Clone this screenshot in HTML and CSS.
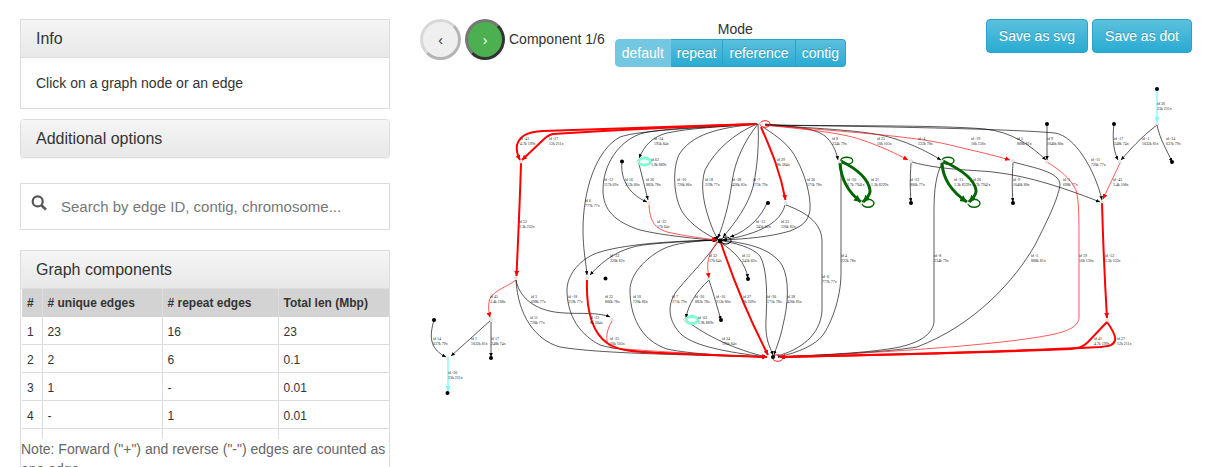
FILE: index.html
```html
<!DOCTYPE html>
<html lang="en">
<head>
<meta charset="utf-8">
<title>Assembly graph</title>
<link rel="stylesheet" href="styles.css">
</head>
<body>
<div class="page">
  <aside class="side">
    <section class="panel">
      <h3 class="panel-head">Info</h3>
      <div class="panel-body">Click on a graph node or an edge</div>
    </section>
    <section class="panel panel-round">
      <h3 class="panel-head panel-head-only">Additional options</h3>
    </section>
    <div class="search">
      <svg class="search-icon" viewBox="0 0 16 16" width="16" height="16"><circle cx="6.7" cy="6.4" r="5" fill="none" stroke="#555" stroke-width="2.2"/><path d="M10.4 10.2 L15 14.6" stroke="#555" stroke-width="2.6" fill="none"/></svg>
      <span class="search-ph">Search by edge ID, contig, chromosome...</span>
    </div>
    <section class="panel panel-comp">
      <h3 class="panel-head">Graph components</h3>
      <div class="table-wrap">
        <table class="comp">
          <thead><tr><th class="c1">#</th><th class="c2"># unique edges</th><th class="c3"># repeat edges</th><th class="c4">Total len (Mbp)</th></tr></thead>
          <tbody>
            <tr><td>1</td><td>23</td><td>16</td><td>23</td></tr>
            <tr><td>2</td><td>2</td><td>6</td><td>0.1</td></tr>
            <tr><td>3</td><td>1</td><td>-</td><td>0.01</td></tr>
            <tr><td>4</td><td>-</td><td>1</td><td>0.01</td></tr>
            <tr><td>5</td><td>1</td><td>-</td><td>0.01</td></tr>
          </tbody>
        </table>
      </div>
      <p class="note">Note: Forward ("+") and reverse ("-") edges are counted as one edge.</p>
    </section>
  </aside>
  <main class="main">
    <div class="toolbar">
      <button class="round round-prev">‹</button>
      <button class="round round-next">›</button>
      <span class="comp-label">Component 1/6</span>
      <div class="mode">
        <div class="mode-title">Mode</div>
        <div class="seg">
          <button class="seg-btn seg-active">default</button><button class="seg-btn">repeat</button><button class="seg-btn">reference</button><button class="seg-btn">contig</button>
        </div>
      </div>
      <div class="saves">
        <button class="btn-info">Save as svg</button>
        <button class="btn-info">Save as dot</button>
      </div>
    </div>
    <svg class="graph" width="802" height="387" viewBox="420 80 802 387">
      <defs>
        <marker id="ab" markerUnits="userSpaceOnUse" markerWidth="5" markerHeight="4" refX="4" refY="1.75" orient="auto"><path d="M0 0 L4 1.75 L0 3.5 Z" fill="#000"/></marker>
        <marker id="ar" markerUnits="userSpaceOnUse" markerWidth="6" markerHeight="5" refX="5" refY="2.5" orient="auto"><path d="M0 0 L5 2.5 L0 5 Z" fill="#f00"/></marker>
        <marker id="ag" markerUnits="userSpaceOnUse" markerWidth="8" markerHeight="7" refX="7" refY="3.5" orient="auto"><path d="M0 0 L7 3.5 L0 7 Z" fill="#060"/></marker>
        <marker id="ac" markerUnits="userSpaceOnUse" markerWidth="6" markerHeight="5" refX="5" refY="2.5" orient="auto"><path d="M0 0 L5 2.5 L0 5 Z" fill="#7ff"/></marker>
      </defs>

      <g class="e-black" marker-end="url(#ab)">
        <path d="M757 124 C728 127 695 131 680 153 C672 166 673 198 683 213 C692 226 705 233 717 240"/>
        <path d="M757 124 C735 133 715 150 705 170 C700 185 703 205 713 230 L718 240"/>
        <path d="M758 124 C745 140 735 160 732 182 C729 205 724 222 718 238"/>
        <path d="M758 124 C759 140 758 165 753 187 C748 205 736 222 723 237"/>
        <path d="M763 127 C778 137 790 145 797 160 C805 175 811 195 810 210 C808 222 802 226 790 231 C770 237 745 239 722 240"/>
        <path d="M757 124 C700 128 640 130 620 137 C596 150 583 190 583 230 C583 250 586 262 587 275"/>
        <path d="M757 124 C710 127 660 128 640 134 C618 142 603 165 603 190 C603 210 615 222 640 230 C665 236 695 238 717 241"/>
        <path d="M757 124 C720 127 690 128 667 133 C652 137 645 145 639 158"/>
        <path d="M639 164 L648 200"/>
        <path d="M622 162 C620 180 630 195 647 202"/>
        <path d="M767 203 C762 215 750 230 730 237"/>
        <path d="M785 205 C782 216 772 232 723 240"/>
        <path d="M765 124 C790 126 815 128 825 136 C832 142 836 150 838 160"/>
        <path d="M765 125 C810 128 860 130 885 136 C905 141 925 150 941 160"/>
        <path d="M765 125 C830 126 940 125 985 129 C1012 132 1030 145 1046 160"/>
        <path d="M765 125 C830 126 1000 128 1055 133 C1075 136 1095 170 1102 200"/>
        <path d="M717 240 C690 241 660 243 643 245 C622 248 605 258 590 275"/>
        <path d="M717 240 C680 241 630 243 600 252 C580 258 567 275 567 290 C567 310 575 332 600 345 C625 353 700 355 767 357"/>
        <path d="M717 240 C695 241 675 243 663 249 C645 258 630 275 630 290 C630 315 640 340 667 349 C690 354 730 356 767 357"/>
        <path d="M718 242 C705 260 690 275 680 287 C665 303 668 322 682 335 C695 346 725 352 767 357"/>
        <path d="M718 240 C735 243 752 247 760 256 C768 270 767 300 766 320 C765 340 770 347 773 355"/>
        <path d="M720 240 C745 243 770 247 782 265 C790 280 788 305 783 325 C780 340 776 348 774 355"/>
        <path d="M687 321 C705 335 735 350 767 357"/>
        <path d="M720 242 C735 252 745 262 748 278"/>
        <path d="M709 280 C696 292 688 305 686 318"/>
        <path d="M709 280 C714 295 718 310 721 320"/>
        <path d="M516 280 C520 300 538 312 565 313 C580 314 598 312 610 317"/>
        <path d="M516 280 C518 315 535 340 560 347 C600 354 700 355 767 357"/>
        <path d="M491 320 L451 356"/>
        <path d="M434 320 C428 340 432 350 446 357"/>
        <path d="M1157 125 C1140 138 1130 150 1121 160"/>
        <path d="M1114 124 C1112 140 1114 152 1118 160"/>
        <path d="M1157 125 C1160 140 1167 150 1172 162"/>
        <path d="M1047 124 L1047 160"/>
        <path d="M491 322 L491 357"/>
        <path d="M911 163 C910 178 910 190 911 202"/>
        <path d="M1013 163 C1012 178 1012 190 1013 202"/>
        <path d="M912 162 C940 170 975 170 993 172 C1030 176 1070 190 1100 202"/>
      </g>
      <g class="e-black">
        <path d="M786 205 C805 212 821 222 822 240 L822 310 C821 335 800 350 777 356"/>
        <path d="M841 164 L841 273 C841 300 830 325 823 335 C815 345 800 352 778 357"/>
        <path d="M942 163 C936 175 934 190 934 210 L934 322 C932 335 920 342 900 347 C870 353 820 355 778 357"/>
        <path d="M1013 162 C1035 168 1060 172 1060 185 C1058 200 1045 225 1035 245 C1015 280 975 325 917 347 C880 353 820 355 778 357"/>
      </g>
      <g class="e-red-thick" marker-end="url(#ar)">
        <path d="M757 124 C700 126 590 129 543 131 C528 132 520 135 517 145 C516 150 518 156 520 160"/>
        <path d="M757 124 C700 126 600 131 553 134 C548 135 546 137 543 140 L522 160"/>
        <path d="M521 163 C520 200 518 240 516.5 276"/>
        <path d="M1102 203 C1103 240 1105 285 1107 318"/>
        <path d="M1107 322 L1088 342 C1082 348 1078 348 1070 349 C980 353 880 355 780 357"/>
        <path d="M1107 322 C1112 329 1116 336 1115 340 C1114 346 1108 346 1100 347 C1000 352 880 355 780 357"/>
        <path d="M761 127 C770 148 780 170 785.5 200"/>
        <path d="M721 243 C735 285 750 320 768 355"/>
        <path d="M587 280 C586 310 592 332 607 343 C620 352 640 352 660 353 L767 357"/>
      </g>
      <g class="e-red" marker-end="url(#ar)">
        <path d="M516 280 C505 288 490 292 489 302 C488 308 489 313 490 317.5"/>
        <path d="M1120 163 L1103 199"/>
        <path d="M649 205 C650 222 655 228 667 232 C685 236 700 238 717 240"/>
        <path d="M717 242 C708 255 706 262 709 278"/>
        <path d="M612 321 C605 332 605 345 612 348 C660 352 720 355 767 357"/>
        <path d="M765 125 C800 129 840 132 862 140 C880 146 895 153 908 160"/>
        <path d="M765 125 C820 130 910 135 950 145 C970 150 990 154 1010 160"/>
        <path d="M1047 162 C1060 170 1070 178 1076 190 C1079 200 1079 220 1079 240 L1079 318 C1078 326 1070 331 1050 335 C1000 345 880 353 780 357"/>
      </g>
      <g class="e-green" marker-end="url(#ag)">
        <path d="M840 163 C841 180 848 192 861 202"/>
        <path d="M841 161 C855 168 868 178 870 190 C871 195 866 199 863 202"/>
        <path d="M942 163 C943 180 952 192 967 202"/>
        <path d="M943 161 C958 168 974 178 976 190 C977 195 972 199 969 202"/>
      </g>
      <g class="e-cyan" marker-end="url(#ac)">
        <path d="M1157 90 L1157 122"/>
        <path d="M448 359 L448 391"/>
      </g>

      <g class="loop-green">
        <ellipse cx="846.7" cy="160.7" rx="6" ry="3.5"/><ellipse cx="868" cy="203.3" rx="6" ry="4"/>
        <ellipse cx="948" cy="160.7" rx="6" ry="3.5"/><ellipse cx="974" cy="203.3" rx="6" ry="4"/>
      </g>
      <g class="loop-aqua">
        <ellipse cx="644.5" cy="161.5" rx="6" ry="3.5"/><ellipse cx="692" cy="320" rx="6" ry="3.5"/>
      </g>
      <ellipse class="loop-red" cx="765" cy="124" rx="5" ry="3.3"/>
      <ellipse class="loop-red" cx="777.7" cy="358" rx="5" ry="3.3"/>
      <ellipse class="loop-black" cx="726" cy="240.5" rx="5" ry="3.5"/>

      <g class="dots">
        <circle cx="622" cy="161.5" r="2"/><circle cx="768" cy="203" r="2"/><circle cx="911" cy="203" r="2"/>
        <circle cx="1013" cy="203" r="2"/><circle cx="1047" cy="124" r="2"/><circle cx="1114" cy="124" r="2"/>
        <circle cx="1157" cy="89" r="2"/><circle cx="1172" cy="162" r="2"/><circle cx="748" cy="279" r="2"/>
        <circle cx="721" cy="320" r="2"/><circle cx="605.5" cy="278.5" r="2"/><circle cx="434" cy="320" r="2"/>
        <circle cx="491" cy="358" r="2"/><circle cx="447.5" cy="393" r="2"/><circle cx="720" cy="241" r="2.4"/><circle cx="773" cy="357" r="2"/>
      </g>
      <g class="nodes">
        <circle cx="761" cy="123.5" r="1.3"/><circle cx="521" cy="162" r="1.3"/><circle cx="516" cy="278" r="1.3"/><circle cx="612" cy="320" r="1.3"/>
        <circle cx="491" cy="320" r="1.3"/><circle cx="448" cy="358" r="1.3"/><circle cx="786" cy="203" r="1.3"/><circle cx="840" cy="162" r="1.3"/>
        <circle cx="861.5" cy="203" r="1.3"/><circle cx="942" cy="161" r="1.3"/><circle cx="968" cy="203" r="1.3"/><circle cx="911" cy="161" r="1.3"/>
        <circle cx="1013" cy="161" r="1.3"/><circle cx="1047" cy="162" r="1.3"/><circle cx="1120" cy="162" r="1.3"/><circle cx="1157" cy="124" r="1.3"/>
        <circle cx="1102" cy="202" r="1.3"/><circle cx="1107" cy="320" r="1.3"/><circle cx="638" cy="162" r="1.3"/><circle cx="649" cy="203" r="1.3"/>
        <circle cx="587" cy="278" r="1.3"/><circle cx="709" cy="279" r="1.3"/><circle cx="685" cy="320" r="1.3"/>
      </g>

      <g class="labels">
        <text x="520" y="139.5">id -41<tspan x="520" dy="5.2">4.7k 199x</tspan></text>
        <text x="549" y="139.5">id -27<tspan x="549" dy="5.2">12k 211x</tspan></text>
        <text x="654" y="139.5">id -34<tspan x="654" dy="5.2">195k 84x</tspan></text>
        <text x="651" y="160.6">id 62<tspan x="651" dy="5.2">1.9k 889x</tspan></text>
        <text x="604" y="181">id -12<tspan x="604" dy="5.2">117k 69x</tspan></text>
        <text x="625" y="181">id 16<tspan x="625" dy="5.2">212k 80x</tspan></text>
        <text x="646" y="181">id 26<tspan x="646" dy="5.2">882k 78x</tspan></text>
        <text x="677" y="181">id -10<tspan x="677" dy="5.2">720k 86x</tspan></text>
        <text x="705" y="181">id 18<tspan x="705" dy="5.2">219k 77x</tspan></text>
        <text x="732" y="181">id -38<tspan x="732" dy="5.2">426k 83x</tspan></text>
        <text x="753" y="181">id -7<tspan x="753" dy="5.2">171k 79x</tspan></text>
        <text x="585" y="201.6">id 6<tspan x="585" dy="5.2">777k 77x</tspan></text>
        <text x="657" y="222.6">id -32<tspan x="657" dy="5.2">17k 64x</tspan></text>
        <text x="519" y="222.6">id 52<tspan x="519" dy="5.2">2.3k 232x</tspan></text>
        <text x="756" y="222.6">id -13<tspan x="756" dy="5.2">345k 82x</tspan></text>
        <text x="777" y="160.6">id 29<tspan x="777" dy="5.2">8k 384x</tspan></text>
        <text x="807" y="181">id 36<tspan x="807" dy="5.2">171k 78x</tspan></text>
        <text x="832" y="139.5">id 8<tspan x="832" dy="5.2">234k 79x</tspan></text>
        <text x="877" y="139.5">id 25<tspan x="877" dy="5.2">10k 103x</tspan></text>
        <text x="918" y="139.5">id -4<tspan x="918" dy="5.2">222k 78x</tspan></text>
        <text x="971" y="139.5">id -19<tspan x="971" dy="5.2">10k 130x</tspan></text>
        <text x="1017" y="139.6">id 5<tspan x="1017" dy="5.2">888k 81x</tspan></text>
        <text x="1047" y="139.6">id 9<tspan x="1047" dy="5.2">1040k 80x</tspan></text>
        <text x="847" y="181">id -20<tspan x="847" dy="5.2">1.7k 7941x</tspan></text>
        <text x="871" y="181">id 31<tspan x="871" dy="5.2">1.3k 8229x</tspan></text>
        <text x="954" y="181">id -31<tspan x="954" dy="5.2">1.3k 8229x</tspan></text>
        <text x="973" y="181">id 20<tspan x="973" dy="5.2">1.7k 7941x</tspan></text>
        <text x="910" y="181">id -22<tspan x="910" dy="5.2">806k 77x</tspan></text>
        <text x="1013" y="181">id -9<tspan x="1013" dy="5.2">1040k 80x</tspan></text>
        <text x="781" y="222.6">id 33<tspan x="781" dy="5.2">320k 82x</tspan></text>
        <text x="1091" y="160.6">id -11<tspan x="1091" dy="5.2">720k 77x</tspan></text>
        <text x="1063" y="181">id -3<tspan x="1063" dy="5.2">698k 77x</tspan></text>
        <text x="1113" y="181">id -45<tspan x="1113" dy="5.2">3.4k 108x</tspan></text>
        <text x="1114" y="139.6">id -17<tspan x="1114" dy="5.2">248k 74x</tspan></text>
        <text x="1142" y="139.6">id -1<tspan x="1142" dy="5.2">1032k 81x</tspan></text>
        <text x="1166" y="139.6">id -14<tspan x="1166" dy="5.2">637k 79x</tspan></text>
        <text x="1157" y="105">id 30<tspan x="1157" dy="5.2">33k 231x</tspan></text>
        <text x="610" y="256.6">id -33<tspan x="610" dy="5.2">320k 82x</tspan></text>
        <text x="709" y="256.6">id 32<tspan x="709" dy="5.2">17k 64x</tspan></text>
        <text x="742" y="256.6">id 13<tspan x="742" dy="5.2">345k 82x</tspan></text>
        <text x="531" y="298">id 3<tspan x="531" dy="5.2">698k 77x</tspan></text>
        <text x="568" y="298">id -18<tspan x="568" dy="5.2">219k 77x</tspan></text>
        <text x="605" y="298">id 22<tspan x="605" dy="5.2">806k 78x</tspan></text>
        <text x="633" y="298">id 10<tspan x="633" dy="5.2">720k 86x</tspan></text>
        <text x="672" y="298">id 7<tspan x="672" dy="5.2">171k 79x</tspan></text>
        <text x="695" y="298">id -26<tspan x="695" dy="5.2">882k 78x</tspan></text>
        <text x="716" y="298">id -16<tspan x="716" dy="5.2">212k 80x</tspan></text>
        <text x="743" y="298">id 37<tspan x="743" dy="5.2">8k 269x</tspan></text>
        <text x="767" y="298">id -36<tspan x="767" dy="5.2">171k 78x</tspan></text>
        <text x="787" y="298">id 38<tspan x="787" dy="5.2">426k 83x</tspan></text>
        <text x="530" y="319">id 11<tspan x="530" dy="5.2">720k 77x</tspan></text>
        <text x="590" y="319">id -23<tspan x="590" dy="5.2">8k 384x</tspan></text>
        <text x="698" y="319">id -62<tspan x="698" dy="5.2">1.9k 889x</tspan></text>
        <text x="610" y="340">id -25<tspan x="610" dy="5.2">10k 103x</tspan></text>
        <text x="722" y="340">id 34<tspan x="722" dy="5.2">195k 84x</tspan></text>
        <text x="841" y="256.6">id 4<tspan x="841" dy="5.2">222k 78x</tspan></text>
        <text x="934" y="256.6">id -8<tspan x="934" dy="5.2">234k 79x</tspan></text>
        <text x="1031" y="256.6">id -5<tspan x="1031" dy="5.2">888k 81x</tspan></text>
        <text x="1079" y="256.6">id 19<tspan x="1079" dy="5.2">10k 130x</tspan></text>
        <text x="1105" y="256.6">id -52<tspan x="1105" dy="5.2">2.3k 232x</tspan></text>
        <text x="822" y="278">id -6<tspan x="822" dy="5.2">777k 77x</tspan></text>
        <text x="1094" y="340">id 41<tspan x="1094" dy="5.2">4.7k 199x</tspan></text>
        <text x="1117" y="340">id 27<tspan x="1117" dy="5.2">12k 211x</tspan></text>
        <text x="490" y="298">id 45<tspan x="490" dy="5.2">3.4k 108x</tspan></text>
        <text x="433" y="340">id 14<tspan x="433" dy="5.2">637k 79x</tspan></text>
        <text x="471" y="340">id 1<tspan x="471" dy="5.2">1032k 81x</tspan></text>
        <text x="491" y="340">id 17<tspan x="491" dy="5.2">248k 74x</tspan></text>
        <text x="448" y="374">id -30<tspan x="448" dy="5.2">33k 231x</tspan></text>
      </g>
    </svg>
  </main>
</div>
</body>
</html>
```
FILE: styles.css
```css
* { box-sizing: border-box; }
html, body { margin: 0; padding: 0; height: 467px; overflow: hidden; background: #fff; }
body { font-family: "Liberation Sans", Arial, sans-serif; font-size: 14px; line-height: 20px; color: #333; }

.page { display: flex; padding: 19px 0 0 20px; align-items: flex-start; }
.side { width: 370px; flex: none; }
.main { margin-left: 30px; flex: 1; min-width: 0; }

.panel { border: 1px solid #ddd; background: #fff; margin-bottom: 10px; }
.panel-round { border-radius: 4px; margin-bottom: 25px; box-shadow: 0 1px 1px rgba(0,0,0,.05); }
.panel-head {
  margin: 0; padding: 10px 15px 9.4px; font-size: 16px; font-weight: 400; line-height: 17.6px; color: #333;
  background: linear-gradient(#f5f5f5, #e8e8e8); border-bottom: 1px solid #ddd;
}
.panel-head-only { border-bottom: 0; border-radius: 3px; }
.panel-body { padding: 15px; }

.search { height: 47px; border: 1px solid #ddd; display: flex; align-items: center; margin-bottom: 20px; padding-left: 10px; }
.search-icon { flex: none; margin-top: -6px; }
.search-ph { margin-left: 14px; font-size: 15px; color: #777; margin-top: 1px; }

.panel-comp { margin-bottom: 0; height: 260px; }
.table-wrap { height: 150px; overflow: hidden; padding-left: 1px; }
.comp { border-collapse: collapse; table-layout: fixed; width: 367px; font-size: 12px; }
.comp th, .comp td { border: 1px solid #ddd; padding: 4px 5px 3px; text-align: left; height: 28px; }
.comp td { padding: 5px 5px 2px; }
.comp tr:first-child td { border-top: 0; }
.comp th { background: #d3d3d3; border-top: 0; border-bottom: 0; font-weight: 700; }
.comp th:first-child, .comp td:first-child { border-left: 0; }
.comp th:last-child, .comp td:last-child { border-right: 0; }
.c1 { width: 20px; }
.c2 { width: 120px; }
.c3 { width: 116px; }
.c4 { width: 111px; }
.note { margin: 0; color: #666; background: #fff; }

.toolbar { display: flex; align-items: flex-start; height: 61px; }
.round { width: 41px; height: 41px; border-radius: 50%; padding: 0; font: 14px "Liberation Sans", Arial, sans-serif; flex: none; border-style: solid; border-width: 3px; }
.round-prev { background: #efefef; color: #333; border-color: #d8d8d8 #b4b4b4 #b4b4b4 #d8d8d8; }
.round-next { width: 40px; margin-left: 4px; background: #4caf50; color: #fff; border-color: #777 #333 #333 #777; }
.comp-label { margin-left: 4px; margin-top: 10px; white-space: nowrap; }
.mode { margin-left: 10px; display: flex; flex-direction: column; align-items: center; }
.mode-title { padding-left: 10px; }
.seg { display: flex; }
.seg-btn {
  height: 28px; padding: 0 6px; font: 14px "Liberation Sans", Arial, sans-serif; color: #fff;
  background: linear-gradient(#5bc0de, #2aabd2); border: 1px solid #28a4c9; border-left-width: 0; text-shadow: 0 -1px 0 rgba(0,0,0,.2);
}
.seg-btn:first-child { border-left-width: 1px; border-radius: 4px 0 0 4px; }
.seg-btn:last-child { border-radius: 0 4px 4px 0; }
.seg-active { background: #74c7e1; border-color: #74c7e1; text-shadow: none; }
.saves { margin-left: auto; margin-right: 30px; display: flex; gap: 4px; }
.btn-info {
  height: 34px; padding: 0 12px; font: 14px "Liberation Sans", Arial, sans-serif; color: #fff; border: 1px solid #28a4c9; border-radius: 4px;
  background: linear-gradient(#5bc0de, #2aabd2); text-shadow: 0 -1px 0 rgba(0,0,0,.2);
}

.graph { display: block; }
.graph g > path, .graph ellipse { fill: none; }
.e-black path { stroke: #000; stroke-width: .65; }
.e-red-thick path { stroke: #f00; stroke-width: 2; }
.e-red path { stroke: #f00; stroke-width: .65; }
.e-green path { stroke: #060; stroke-width: 3; }
.e-cyan path { stroke: #7ff; stroke-width: 1.3; }
.loop-green ellipse { stroke: #060; stroke-width: 1.4; }
.loop-aqua ellipse { stroke: #7fffd4; stroke-width: 2.8; }
.loop-red { stroke: #f00; stroke-width: .9; }
.loop-black { stroke: #000; stroke-width: 1; }
.dots circle { fill: #000; }
.nodes circle { fill: #fff; stroke: #999; stroke-width: .4; }
.labels text { font-family: "Liberation Serif", "Times New Roman", serif; font-size: 3.9px; fill: #222; }
```
